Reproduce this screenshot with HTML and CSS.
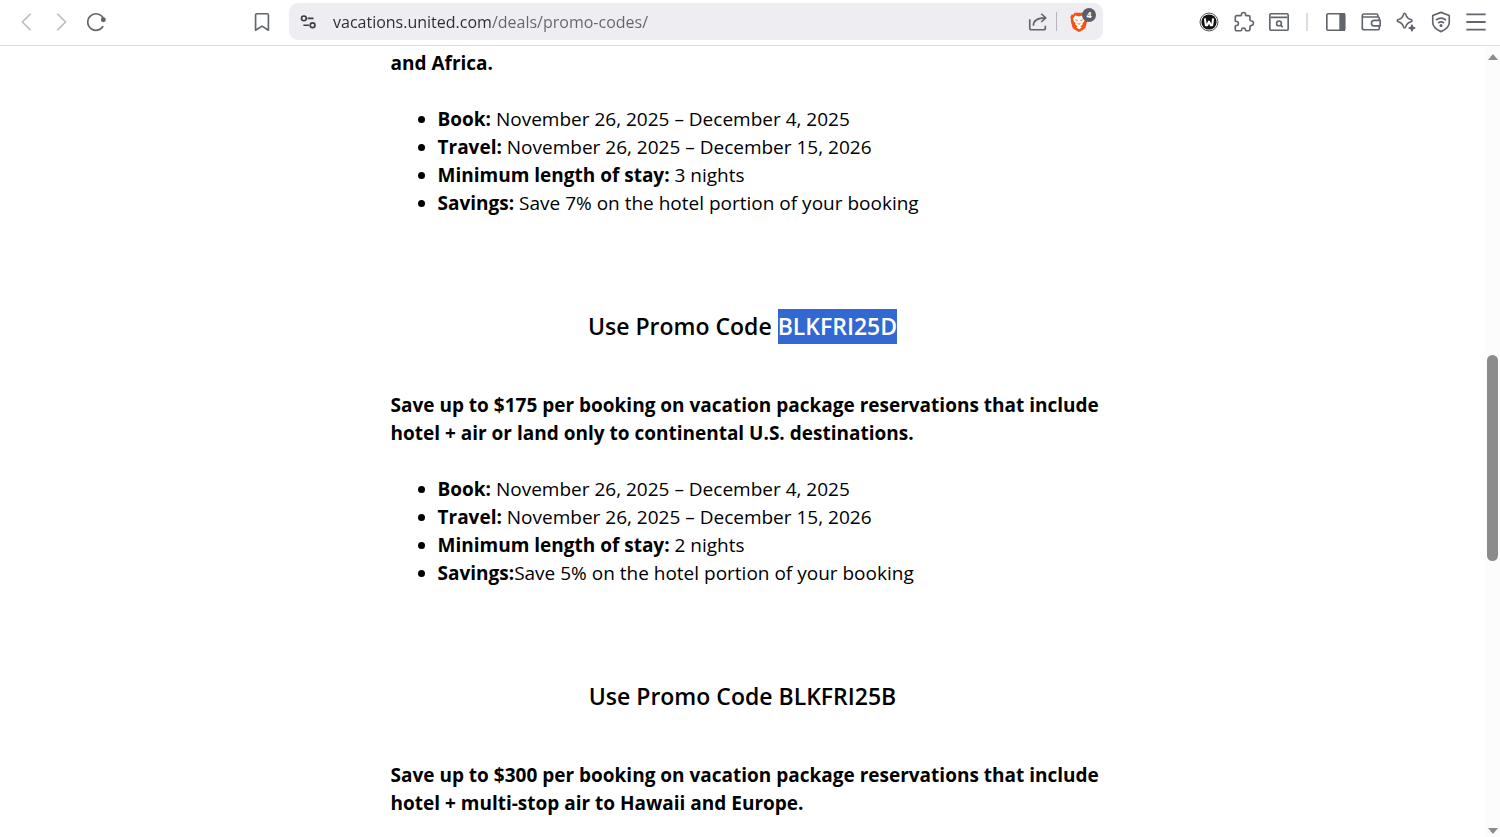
FILE: index.html
```html
<!DOCTYPE html>
<html lang="en">
<head>
  <meta charset="utf-8">
  <title>Promo Codes</title>
  <link rel="stylesheet" href="styles.css">
</head>
<body>
  <header class="toolbar">
    <nav class="nav">
      <button class="tool faded" aria-label="Back"><svg viewBox="0 0 24 24"><path d="M17 3L8 12l9 9"/></svg></button>
      <button class="tool faded" aria-label="Forward"><svg viewBox="0 0 24 24"><path d="M8 3l9 9-9 9"/></svg></button>
      <button class="tool" aria-label="Reload"><svg viewBox="0 0 24 24"><path d="M19.8 16.5A9 9 0 1 1 20 8"/><circle class="solid" cx="20" cy="9.5" r="1.8"/></svg></button>
    </nav>
    <div class="location">
      <button class="tool" aria-label="Bookmark"><svg viewBox="0 0 24 24"><path d="M5 21V4.500a1.500 1.500 0 0 1 1.500-1.500h11a1.500 1.500 0 0 1 1.500 1.500V21l-7-4.500z"/></svg></button>
      <div class="address">
        <button class="tool dark" aria-label="Site settings"><svg viewBox="0 0 24 24"><circle cx="7.500" cy="8" r="2.600"/><path d="M11.500 8H18M7 15.500h6"/><circle cx="17" cy="15.500" r="2.600"/></svg></button>
        <input class="url" type="text" aria-label="Address" value="vacations.united.com/deals/promo-codes/">
        <button class="tool" aria-label="Share"><svg viewBox="0 0 24 24"><path d="M3 9v9.500a2 2 0 0 0 2 2h13a2 2 0 0 0 2-2V16"/><path d="M7 16c0-6 4-8.500 13-8.500M15.500 3L20.500 7.500l-5 4.500"/></svg></button>
        <span class="line"></span>
        <button class="tool shield" aria-label="Brave Shields">
          <svg viewBox="0 0 24 24"><path fill="#f9500f" stroke="none" d="M7 2h9l2 2 2-.2 1.500 3-.7 2 .2 2-2 7.500-2 2L12 23l-5-2.700-2-2L3 10.800l.2-2-.7-2L4 3.800l2 .2z"/><path fill="#fff" stroke="none" d="M8 5l4 1 4-1 2.500 3-1 3.500-1.800 2 .3 1.500-2.500 1.500 1.500 1.500L12 20l-3-2 1.500-1.500L8 15l.3-1.500-1.800-2-1-3.500z"/><path stroke="#f9500f" stroke-width="1" d="M8 9.500l2.500 1M16 9.500l-2.500 1M10.500 13.500l1.500 1 1.500-1"/></svg>
          <span class="badge">4</span>
        </button>
      </div>
    </div>
    <div class="extras">
      <button class="tool" aria-label="W extension"><svg viewBox="0 0 24 24"><circle cx="12" cy="12" r="9.800" fill="#fff" stroke="#444" stroke-width="1"/><circle cx="12" cy="12" r="8.300" fill="#111" stroke="none"/><path stroke="#fff" stroke-width="2.200" d="M7.500 8l1 7.500h1.500l2-4 2 4h1.500l1-7.500"/></svg></button>
      <button class="tool" aria-label="Extensions"><svg viewBox="0 0 24 24"><path d="M4 5h4.500c.8 0 .8-.5.800-1.200C9.300 2.500 10.300 1.600 11.500 1.600S13.700 2.500 13.700 3.800c0 .7 0 1.200.8 1.200H17a1.500 1.500 0 0 1 1.500 1.500V9.500c0 1 .5 1 1.200 1.200 1.500.3 2.600 1.200 2.600 2.600s-1.100 2.300-2.600 2.600c-.7.200-1.200.2-1.200 1.200V20a1.500 1.500 0 0 1-1.500 1.500h-2.500c-.8 0-1-.5-1-1.200 0-1.200-.8-1.800-2-1.800s-2 .6-2 1.800c0 .7-.2 1.200-1 1.200H4A1.500 1.500 0 0 1 2.500 20v-3.300c0-.8.5-.900 1.200-.900 1.300 0 2.200-1 2.200-2.200s-.9-2.200-2.200-2.200c-.7 0-1.200-.1-1.200-.900v-4A1.500 1.500 0 0 1 4 5z"/></svg></button>
      <button class="tool" aria-label="Search tabs"><svg viewBox="0 0 24 24"><rect x="2" y="3" width="20" height="18" rx="1.500"/><path d="M3 7h18M14 15.500l2 2"/><circle cx="12" cy="13.500" r="2.600"/></svg></button>
      <span class="divider"></span>
      <button class="tool" aria-label="Sidebar"><svg viewBox="0 0 24 24"><path class="solid" d="M16.500 3h4.500v18h-4.500z"/><rect x="2" y="3" width="19.500" height="18" rx="1.500"/></svg></button>
      <button class="tool" aria-label="Wallet"><svg viewBox="0 0 24 24"><path d="M21 10V8A1.500 1.500 0 0 0 19.500 6.500H2.500V18.500A2 2 0 0 0 4.500 20.500h15A1.500 1.500 0 0 0 21 19v-2.500M2.500 6.500V5A1.700 1.700 0 0 1 4.200 3.300H18A1.500 1.500 0 0 1 19.500 4.800V6.500M22 10.300h-6.500a3 3 0 0 0 0 6H22z"/></svg></button>
      <button class="tool" aria-label="Assistant"><svg viewBox="0 0 24 24"><path d="M10.500 2.500c.8 0 1 .6 1.200 1.200 1 3.600 2 4.600 5.600 5.600.7.200 1.200.500 1.200 1.200s-.5 1-1.200 1.200c-3.600 1-4.600 2-5.600 5.600-.2.700-.5 1.200-1.200 1.200s-1-.5-1.200-1.200c-1-3.600-2-4.600-5.600-5.600-.7-.2-1.200-.5-1.200-1.200s.5-1 1.200-1.200c3.600-1 4.600-2 5.600-5.600.2-.7.5-1.200 1.200-1.200z"/><path class="solid" d="M18.500 15.500l.8 2.200 2.200.8-2.200.8-.8 2.200-.8-2.200-2.200-.8 2.200-.8z"/></svg></button>
      <button class="tool" aria-label="VPN"><svg viewBox="0 0 24 24"><path d="M12 1.500l9 3.500v7.500c0 4-4 7.800-9 10-5-2.200-9-6-9-10V5z"/><path d="M6.500 10c3.300-2.600 7.700-2.600 11 0M8.800 13.200c2-1.600 4.400-1.600 6.400 0"/><circle class="solid" cx="12" cy="15.800" r=".8"/></svg></button>
      <button class="tool" aria-label="Menu"><svg viewBox="0 0 24 24"><path stroke-width="2" d="M1.500 3.700h21M1.500 12h21M1.500 20.300h21"/></svg></button>
    </div>
  </header>

  <div class="viewport">
    <main class="page">
      <article class="content">
        <section>
          <p>and Africa.</p>
          <ul>
            <li><b>Book:</b> November 26, 2025 – December 4, 2025</li>
            <li><b>Travel:</b> November 26, 2025 – December 15, 2026</li>
            <li><b>Minimum length of stay:</b> 3 nights</li>
            <li><b>Savings:</b> Save 7% on the hotel portion of your booking</li>
          </ul>
        </section>
        <section>
          <h2>Use Promo Code <span class="selected">BLKFRI25D</span></h2>
          <p>Save up to $175 per booking on vacation package reservations that include hotel + air or land only to continental U.S. destinations.</p>
          <ul>
            <li><b>Book:</b> November 26, 2025 – December 4, 2025</li>
            <li><b>Travel:</b> November 26, 2025 – December 15, 2026</li>
            <li><b>Minimum length of stay:</b> 2 nights</li>
            <li><b>Savings:</b>Save 5% on the hotel portion of your booking</li>
          </ul>
        </section>
        <section>
          <h2>Use Promo Code BLKFRI25B</h2>
          <p>Save up to $300 per booking on vacation package reservations that include hotel + multi-stop air to Hawaii and Europe.</p>
        </section>
      </article>
    </main>
    <div class="scrollbar">
      <svg class="arrow" viewBox="0 0 12 6"><path d="M1 6l5-6 5 6z"/></svg>
      <div class="track"><div class="thumb"></div></div>
      <svg class="arrow" viewBox="0 0 12 6"><path d="M1 0l5 6 5-6z"/></svg>
    </div>
  </div>
</body>
</html>
```
FILE: styles.css
```css
* {
  box-sizing: border-box;
}
body {
  margin: 0;
  height: 100vh;
  display: flex;
  flex-direction: column;
  overflow: hidden;
  background: #fff;
  color: #000;
  font-family: "Open Sans", sans-serif;
}

/* browser toolbar */
.toolbar {
  display: flex;
  align-items: center;
  flex: none;
  padding: 3px 7px 5px 8px;
  border-bottom: 1px solid #dedee2;
}
.nav, .extras, .location, .address {
  display: flex;
  align-items: center;
}
.location {
  flex: 1;
  gap: 10px;
  margin: 0 88px 0 131px;
}
.address {
  flex: 1;
  height: 37px;
  padding: 0 7px 0 1px;
  border-radius: 9px;
  background: #ededf2;
}
.tool {
  position: relative;
  display: flex;
  align-items: center;
  justify-content: center;
  width: 35px;
  height: 35px;
  padding: 0;
  border: 0;
  background: none;
  color: #62656c;
}
.tool svg {
  width: 22px;
  height: 22px;
  fill: none;
  stroke: currentColor;
  stroke-width: 1.8;
  stroke-linejoin: round;
}
.tool .solid {
  fill: currentColor;
}
.faded {
  color: #b9bbc0;
}
.dark {
  color: #3b3e45;
}
/* host part is darker than the path */
.url {
  flex: 1;
  min-width: 0;
  padding: 0 0 0 8px;
  border: 0;
  outline: 0;
  font: 16px "Open Sans", sans-serif;
  color: transparent;
  background: linear-gradient(to right, #2b2d33 167px, #62656c 167px);
  -webkit-background-clip: text;
  background-clip: text;
}
.line {
  width: 1px;
  height: 19px;
  margin: 0 4px 0 1px;
  background: #b4b5bc;
}
.divider {
  width: 2px;
  height: 18px;
  margin: 0 10px;
  background: #dddde1;
}
.badge {
  position: absolute;
  top: 4px;
  right: 0;
  width: 14px;
  height: 14px;
  border-radius: 7px;
  background: #5b5d6b;
  color: #fff;
  font: bold 9px/14px "Open Sans", sans-serif;
  text-align: center;
}

/* page */
.viewport {
  flex: 1;
  min-height: 0;
  display: flex;
}
.page {
  flex: 1;
  overflow: hidden;
}
.content {
  max-width: 704px;
  margin: 0 auto;
  padding-top: 3px;
  font-size: 19px;
  line-height: 28px;
}
.content p {
  margin: 0 -10px 28px 0;
  font-weight: bold;
}
.content ul {
  margin: 0;
  padding-left: 47px;
}
.content h2 {
  margin: 0;
  padding: 92px 0 47px;
  font-size: 23px;
  line-height: 35px;
  font-weight: 600;
  text-align: center;
}
.selected {
  display: inline-block;
  background: #3367d1;
  color: #fff;
}
.scrollbar {
  display: flex;
  flex-direction: column;
  align-items: center;
  width: 15px;
  padding: 8px 0 3px;
  background: #fcfcfc;
}
.arrow {
  width: 12px;
  height: 6px;
  fill: #8b8b8b;
}
.track {
  flex: 1;
  display: flex;
  flex-direction: column;
}
.track::before {
  content: "";
  flex: 295;
}
.track::after {
  content: "";
  flex: 267;
}
.thumb {
  flex: 206;
  width: 11px;
  border-radius: 6px;
  background: #8b8b8b;
}
```
